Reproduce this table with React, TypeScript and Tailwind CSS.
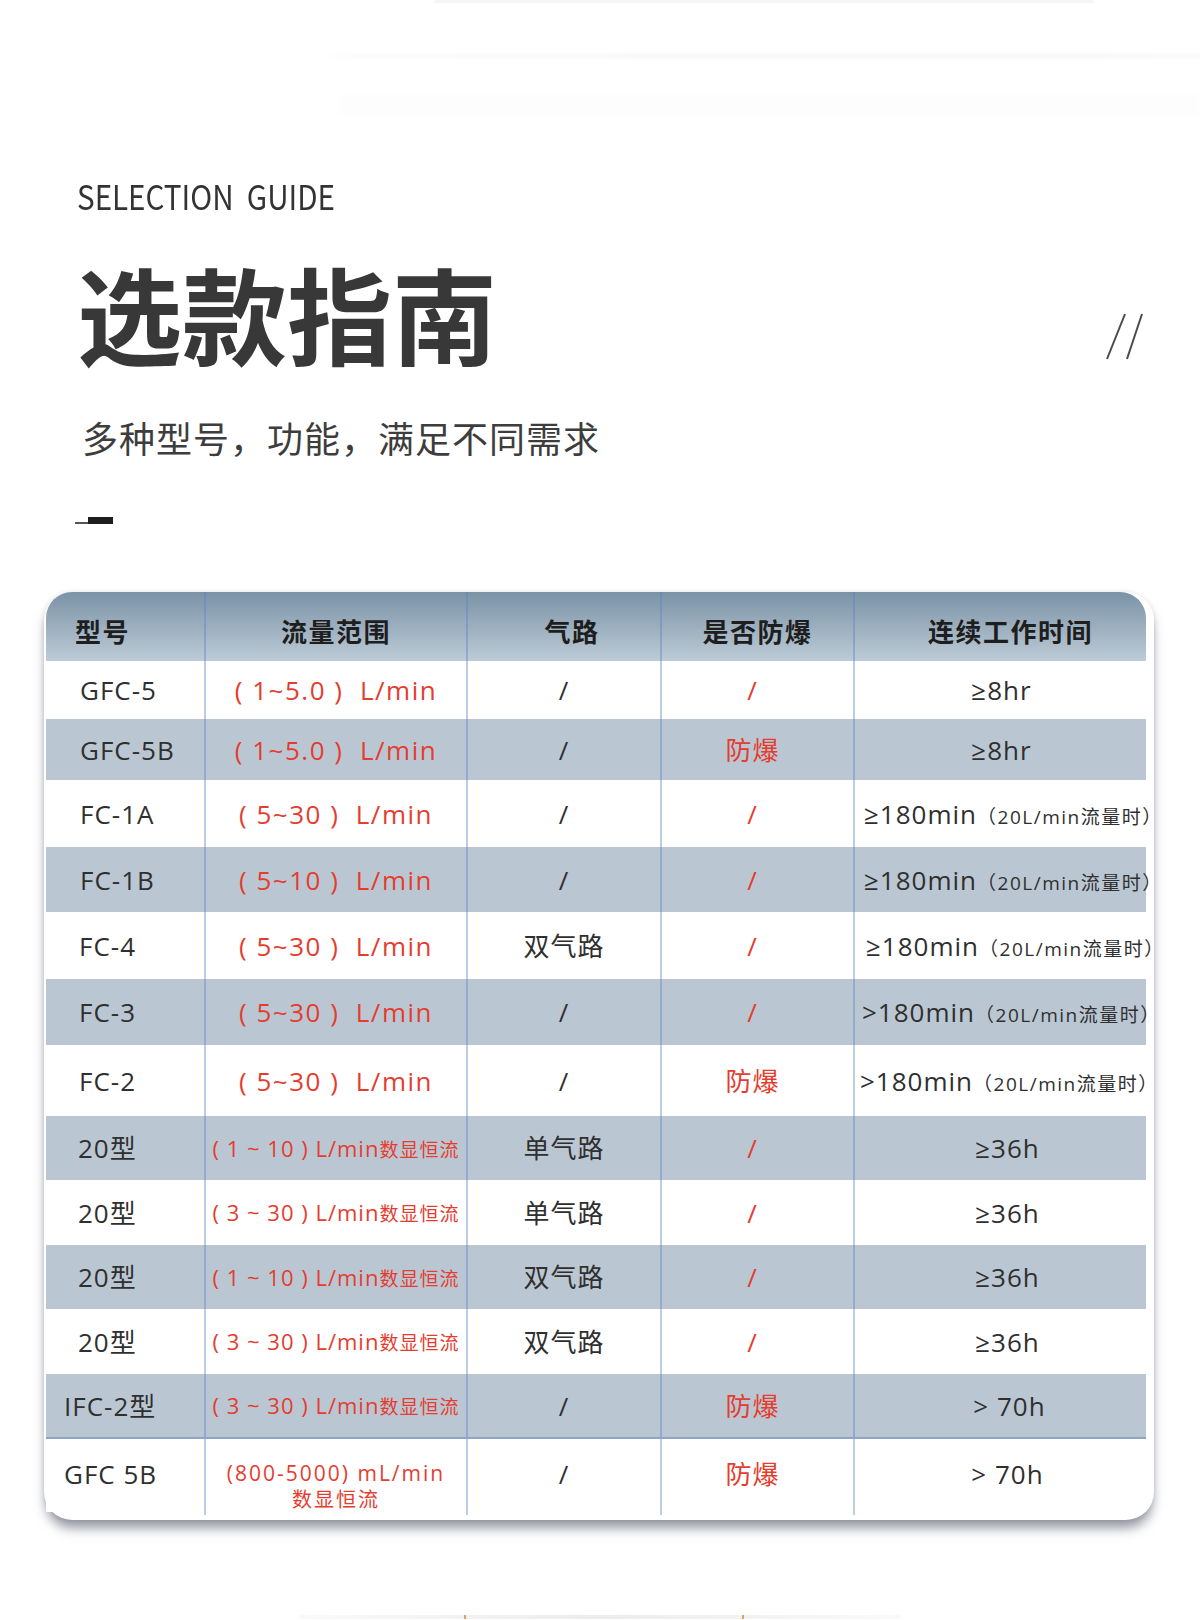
import React from "react";

type RowData = {
  h: string;
  shaded: boolean;
  model: string;
  modelCls: string;
  flow: React.ReactNode;
  gas: string;
  ex: string;
  time: React.ReactNode;
  timeCls: string;
  border?: boolean;
  last?: boolean;
};

const big = (s: string) => (
  <span className="whitespace-pre text-[26px] tracking-[1.5px]">{s}</span>
);

const small = (s: string) => (
  <span className="whitespace-pre">
    <span className="text-[22px] tracking-[1px]">{s}</span>
    <span className="text-[19px] tracking-[1px]">数显恒流</span>
  </span>
);

const longTime = (s: string) => (
  <span className="whitespace-nowrap">
    <span className="text-[26px] tracking-[1px]">{s}</span>
    <span className="text-[19px] tracking-[1.5px]">（20L/min流量时）</span>
  </span>
);

const plain = (s: string) => <span className="text-[26px] tracking-[1px]">{s}</span>;

const rows: RowData[] = [
  { h: "h-[58px]", shaded: false, model: "GFC-5", modelCls: "pl-[34px]", flow: big("( 1~5.0 )  L/min"), gas: "/", ex: "/", time: plain("≥8hr"), timeCls: "justify-center pl-[2px]" },
  { h: "h-[61px]", shaded: true, model: "GFC-5B", modelCls: "pl-[34px]", flow: big("( 1~5.0 )  L/min"), gas: "/", ex: "防爆", time: plain("≥8hr"), timeCls: "justify-center pl-[2px]" },
  { h: "h-[67px]", shaded: false, model: "FC-1A", modelCls: "pl-[34px]", flow: big("( 5~30 )  L/min"), gas: "/", ex: "/", time: longTime("≥180min"), timeCls: "justify-start pl-[9px]" },
  { h: "h-[65px]", shaded: true, model: "FC-1B", modelCls: "pl-[34px]", flow: big("( 5~10 )  L/min"), gas: "/", ex: "/", time: longTime("≥180min"), timeCls: "justify-start pl-[9px]" },
  { h: "h-[67px]", shaded: false, model: "FC-4", modelCls: "pl-[33px]", flow: big("( 5~30 )  L/min"), gas: "双气路", ex: "/", time: longTime("≥180min"), timeCls: "justify-start pl-[11px]" },
  { h: "h-[66px]", shaded: true, model: "FC-3", modelCls: "pl-[33px]", flow: big("( 5~30 )  L/min"), gas: "/", ex: "/", time: longTime(">180min"), timeCls: "justify-start pl-[7px]" },
  { h: "h-[71px]", shaded: false, model: "FC-2", modelCls: "pl-[33px]", flow: big("( 5~30 )  L/min"), gas: "/", ex: "防爆", time: longTime(">180min"), timeCls: "justify-start pl-[5px]" },
  { h: "h-[64px]", shaded: true, model: "20型", modelCls: "pl-[32px]", flow: small("( 1 ~ 10 ) L/min"), gas: "单气路", ex: "/", time: plain("≥36h"), timeCls: "justify-center pl-[14px]" },
  { h: "h-[65px]", shaded: false, model: "20型", modelCls: "pl-[32px]", flow: small("( 3 ~ 30 ) L/min"), gas: "单气路", ex: "/", time: plain("≥36h"), timeCls: "justify-center pl-[14px]" },
  { h: "h-[64px]", shaded: true, model: "20型", modelCls: "pl-[32px]", flow: small("( 1 ~ 10 ) L/min"), gas: "双气路", ex: "/", time: plain("≥36h"), timeCls: "justify-center pl-[14px]" },
  { h: "h-[65px]", shaded: false, model: "20型", modelCls: "pl-[32px]", flow: small("( 3 ~ 30 ) L/min"), gas: "双气路", ex: "/", time: plain("≥36h"), timeCls: "justify-center pl-[14px]" },
  { h: "h-[65px]", shaded: true, model: "IFC-2型", modelCls: "pl-[18px]", flow: small("( 3 ~ 30 ) L/min"), gas: "/", ex: "防爆", time: plain("> 70h"), timeCls: "justify-center pl-[18px]", border: true },
  {
    h: "h-[73px]",
    shaded: false,
    model: "GFC 5B",
    modelCls: "pl-[18px]",
    flow: (
      <div className="flex flex-col items-center">
        <span className="whitespace-pre text-[21px] leading-[24px] tracking-[2px]">(800-5000) mL/min</span>
        <span className="text-[20px] leading-[30px] tracking-[2px]">数显恒流</span>
      </div>
    ),
    gas: "/",
    ex: "防爆",
    time: plain("> 70h"),
    timeCls: "justify-center pl-[14px]",
    last: true,
  },
];

function TableRow({ r }: { r: RowData }) {
  const al = r.last ? "items-start pt-[22px]" : "items-center";
  const line = "border-l-2 border-[#5a82be]/40";
  return (
    <div
      className={`grid grid-cols-[158px_262px_194px_193px_293px] ${r.h} ${r.shaded ? "bg-[#bac7d3]" : "bg-white"} ${
        r.border ? "border-b-2 border-b-[#8ea5c5]" : ""
      }`}
    >
      <div className={`flex ${al} ${r.modelCls} whitespace-nowrap text-[26px] leading-none tracking-[1px] text-[#2f2f2f]`}>{r.model}</div>
      <div className={`flex ${al} justify-center ${line} leading-none text-[#e43d2f]`}>{r.flow}</div>
      <div className={`flex ${al} justify-center ${line} text-[26px] leading-none tracking-[1px] text-[#2f2f2f]`}>{r.gas}</div>
      <div className={`flex ${al} justify-center pr-[10px] ${line} text-[26px] leading-none tracking-[1px] text-[#e43d2f]`}>{r.ex}</div>
      <div className={`flex ${al} ${r.timeCls} ${line} leading-none text-[#2f2f2f]`}>{r.time}</div>
    </div>
  );
}

export default function App() {
  const head = "flex items-center pt-[9px] text-[26px] font-bold leading-none tracking-[1.5px] text-[#1e1e1e]";
  const line = "border-l-2 border-[#5a82be]/40";
  return (
    <div className="h-[1620px] w-[1200px] overflow-hidden bg-white font-['Noto_Sans_CJK_SC',sans-serif]">
      {/* faint strokes at top */}
      <div className="flex h-[179px] flex-col">
        <div className="ml-[434px] h-[3px] w-[660px] bg-[#f6f6f6]" />
        <div className="ml-[330px] mt-[50px] h-[6px] w-[870px] bg-linear-to-r from-[#fdfdfd] via-[#f8f8f8] to-[#fafafa] blur-[1px]" />
        <div className="ml-[340px] mt-[36px] h-[22px] w-[860px] bg-[#fdfdfd] blur-[2px]" />
      </div>

      <div className="pl-[77px] leading-none">
        <span className="inline-block origin-left scale-x-[0.87] whitespace-pre text-[34px] leading-none text-[#333333]">SELECTION  GUIDE</span>
      </div>

      <div className="mt-[46px] flex items-start justify-between pl-[77px] pr-[53px]">
        <div className="text-[105px] font-bold leading-none text-[#383838]">选款指南</div>
        <svg className="mt-[53px]" width="44" height="50" viewBox="0 0 44 50" fill="none">
          <line x1="22" y1="2" x2="4" y2="47" stroke="#4a4a4a" strokeWidth="2" />
          <line x1="39" y1="2" x2="24" y2="47" stroke="#4a4a4a" strokeWidth="2" />
        </svg>
      </div>

      <div className="mt-[55px] pl-[82px] text-[36px] leading-none tracking-[1px] text-[#3d3d3d]">多种型号，功能，满足不同需求</div>

      <div className="mt-[62px] flex items-end pl-[75px]">
        <div className="h-[2px] w-[13px] bg-[#555555]" />
        <div className="h-[7px] w-[25px] bg-[#1e1e1e]" />
      </div>

      <div className="ml-[44px] mt-[68px] w-[1110px] rounded-[28px] bg-white pb-[8px] pl-[2px] pr-[8px] font-['Open_Sans','Noto_Sans_CJK_SC',sans-serif] shadow-[0_10px_12px_-2px_rgba(60,68,85,0.55),0_0_5px_rgba(0,0,0,0.1)]">
        <div className="grid h-[69px] grid-cols-[158px_262px_194px_193px_293px] rounded-t-[26px] bg-linear-to-b from-[#7b93a7] to-[#bdcbd6] font-['Noto_Sans_CJK_SC',sans-serif]">
          <div className={`${head} justify-start pl-[29px]`}>型号</div>
          <div className={`${head} ${line} justify-center`}>流量范围</div>
          <div className={`${head} ${line} justify-center pl-[16px]`}>气路</div>
          <div className={`${head} ${line} justify-center`}>是否防爆</div>
          <div className={`${head} ${line} justify-center pl-[20px]`}>连续工作时间</div>
        </div>
        {rows.map((r, i) => (
          <TableRow key={i} r={r} />
        ))}
      </div>

      <div className="ml-[300px] mt-[95px] flex h-[4px] w-[600px] bg-linear-to-r from-[#fafafa] via-[#ececec] to-[#fafafa]">
        <div className="w-[164px]" />
        <div className="h-[4px] w-[2px] bg-[#e0a060]" />
        <div className="w-[276px]" />
        <div className="h-[4px] w-[2px] bg-[#e0a060]" />
      </div>
    </div>
  );
}
